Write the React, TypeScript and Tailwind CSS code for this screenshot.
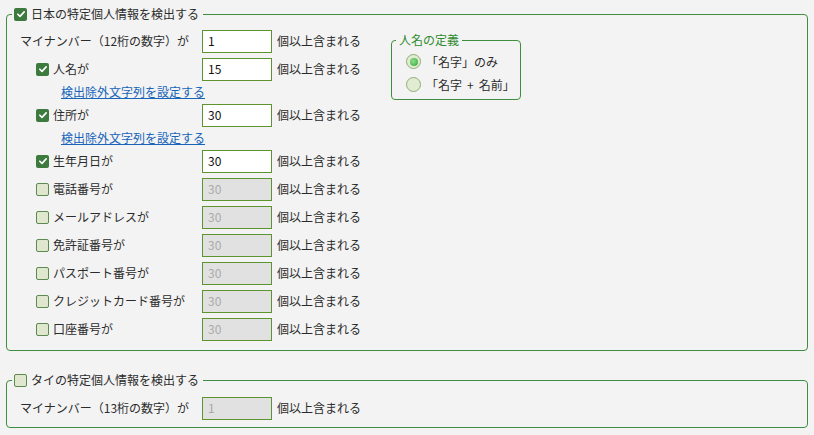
import React from "react";

const FONT = "font-['Meiryo_UI','Noto_Sans_CJK_JP',sans-serif]";

function Check({ checked }: { checked: boolean }) {
  if (checked) {
    return (
      <span className="flex h-[13px] w-[13px] shrink-0 items-center justify-center rounded-[2px] bg-[#3d7a3d]">
        <svg viewBox="0 0 12 12" className="h-[10px] w-[10px]">
          <path d="M2.2 6.3 L4.8 8.8 L9.8 3.4" fill="none" stroke="#fff" strokeWidth="2" strokeLinecap="round" strokeLinejoin="round" />
        </svg>
      </span>
    );
  }
  return <span className="h-[13px] w-[13px] shrink-0 rounded-[2px] border border-[#5f8a4f] bg-[#dfe8cf]" />;
}

function Radio({ checked }: { checked: boolean }) {
  return (
    <span className="flex h-[15px] w-[15px] shrink-0 items-center justify-center rounded-full border border-[#8fae76] bg-[#e2ecd3]">
      {checked && (
        <span className="h-[8px] w-[8px] rounded-full bg-[radial-gradient(circle_at_40%_40%,#8fe08f,#2fa52f)]" />
      )}
    </span>
  );
}

function NumBox({ value, disabled }: { value: string; disabled?: boolean }) {
  return (
    <div
      className={
        "flex h-[23px] w-[70px] shrink-0 items-center border border-[#5e9430] pl-[5px] " +
        (disabled ? "bg-[#e1e1e1] text-[#aaaaaa]" : "bg-white text-[#111111]")
      }
    >
      {value}
    </div>
  );
}

type Row = { label: string; value: string; checked?: boolean; check?: boolean; link?: boolean };

const ROWS: Row[] = [
  { label: "人名が", value: "15", check: true, checked: true, link: true },
  { label: "住所が", value: "30", check: true, checked: true, link: true },
  { label: "生年月日が", value: "30", check: true, checked: true },
  { label: "電話番号が", value: "30", check: true },
  { label: "メールアドレスが", value: "30", check: true },
  { label: "免許証番号が", value: "30", check: true },
  { label: "パスポート番号が", value: "30", check: true },
  { label: "クレジットカード番号が", value: "30", check: true },
  { label: "口座番号が", value: "30", check: true },
];

function CountRow({ row }: { row: Row }) {
  const disabled = row.check ? !row.checked : false;
  return (
    <div className="flex h-[28px] items-center">
      <div className={"flex w-[182px] shrink-0 items-center gap-[4px] " + (row.check ? "pl-[16px]" : "")}>
        {row.check && <Check checked={!!row.checked} />}
        <span>{row.label}</span>
      </div>
      <NumBox value={row.value} disabled={disabled} />
      <span className="ml-[5px]">個以上含まれる</span>
    </div>
  );
}

export default function App() {
  return (
    <div className={`${FONT} min-h-[435px] w-[814px] bg-[#f3f3f3] px-[6px] pt-[6px] text-[12px] leading-[16px] text-[#2b2b2b]`}>
      <fieldset className="rounded-[4px] border border-[#3f8e3f] pb-[7px]">
        <legend className="ml-[5px] flex h-[16px] items-center gap-[4px] px-[2px]">
          <Check checked />
          <span className="pr-[2px]">日本の特定個人情報を検出する</span>
        </legend>
        <div className="flex pl-[13px] pt-[5px]">
          <div className="flex w-[371px] shrink-0 flex-col">
            <CountRow row={{ label: "マイナンバー（12桁の数字）が", value: "1" }} />
            {ROWS.map((r) => (
              <React.Fragment key={r.label}>
                <CountRow row={r} />
                {r.link && (
                  <div className="flex h-[18px] items-center pl-[41px]">
                    <a className="cursor-pointer text-[#1764b8] underline">検出除外文字列を設定する</a>
                  </div>
                )}
              </React.Fragment>
            ))}
          </div>
          <fieldset className="mt-[5px] h-fit w-[130px] rounded-[4px] border border-[#3f8e3f] pb-[3px] pt-[2px]">
            <legend className="ml-[4px] h-[16px] px-[3px] text-[#2e8b2e]">人名の定義</legend>
            <div className="flex h-[23px] items-center gap-[5px] pl-[14px]">
              <Radio checked />
              <span>「名字」のみ</span>
            </div>
            <div className="flex h-[23px] items-center gap-[5px] pl-[14px]">
              <Radio checked={false} />
              <span>
                「名字<span className="mx-[5px]">+</span>名前」
              </span>
            </div>
          </fieldset>
        </div>
      </fieldset>

      <fieldset className="mt-[21px] rounded-[4px] border border-[#3f8e3f] pb-[5px]">
        <legend className="ml-[5px] flex h-[16px] items-center gap-[4px] px-[2px]">
          <Check checked={false} />
          <span className="pr-[2px]">タイの特定個人情報を検出する</span>
        </legend>
        <div className="pl-[13px] pt-[6px]">
          <div className="flex h-[28px] items-center">
            <div className="w-[182px] shrink-0">マイナンバー（13桁の数字）が</div>
            <NumBox value="1" disabled />
            <span className="ml-[5px]">個以上含まれる</span>
          </div>
        </div>
      </fieldset>
    </div>
  );
}
